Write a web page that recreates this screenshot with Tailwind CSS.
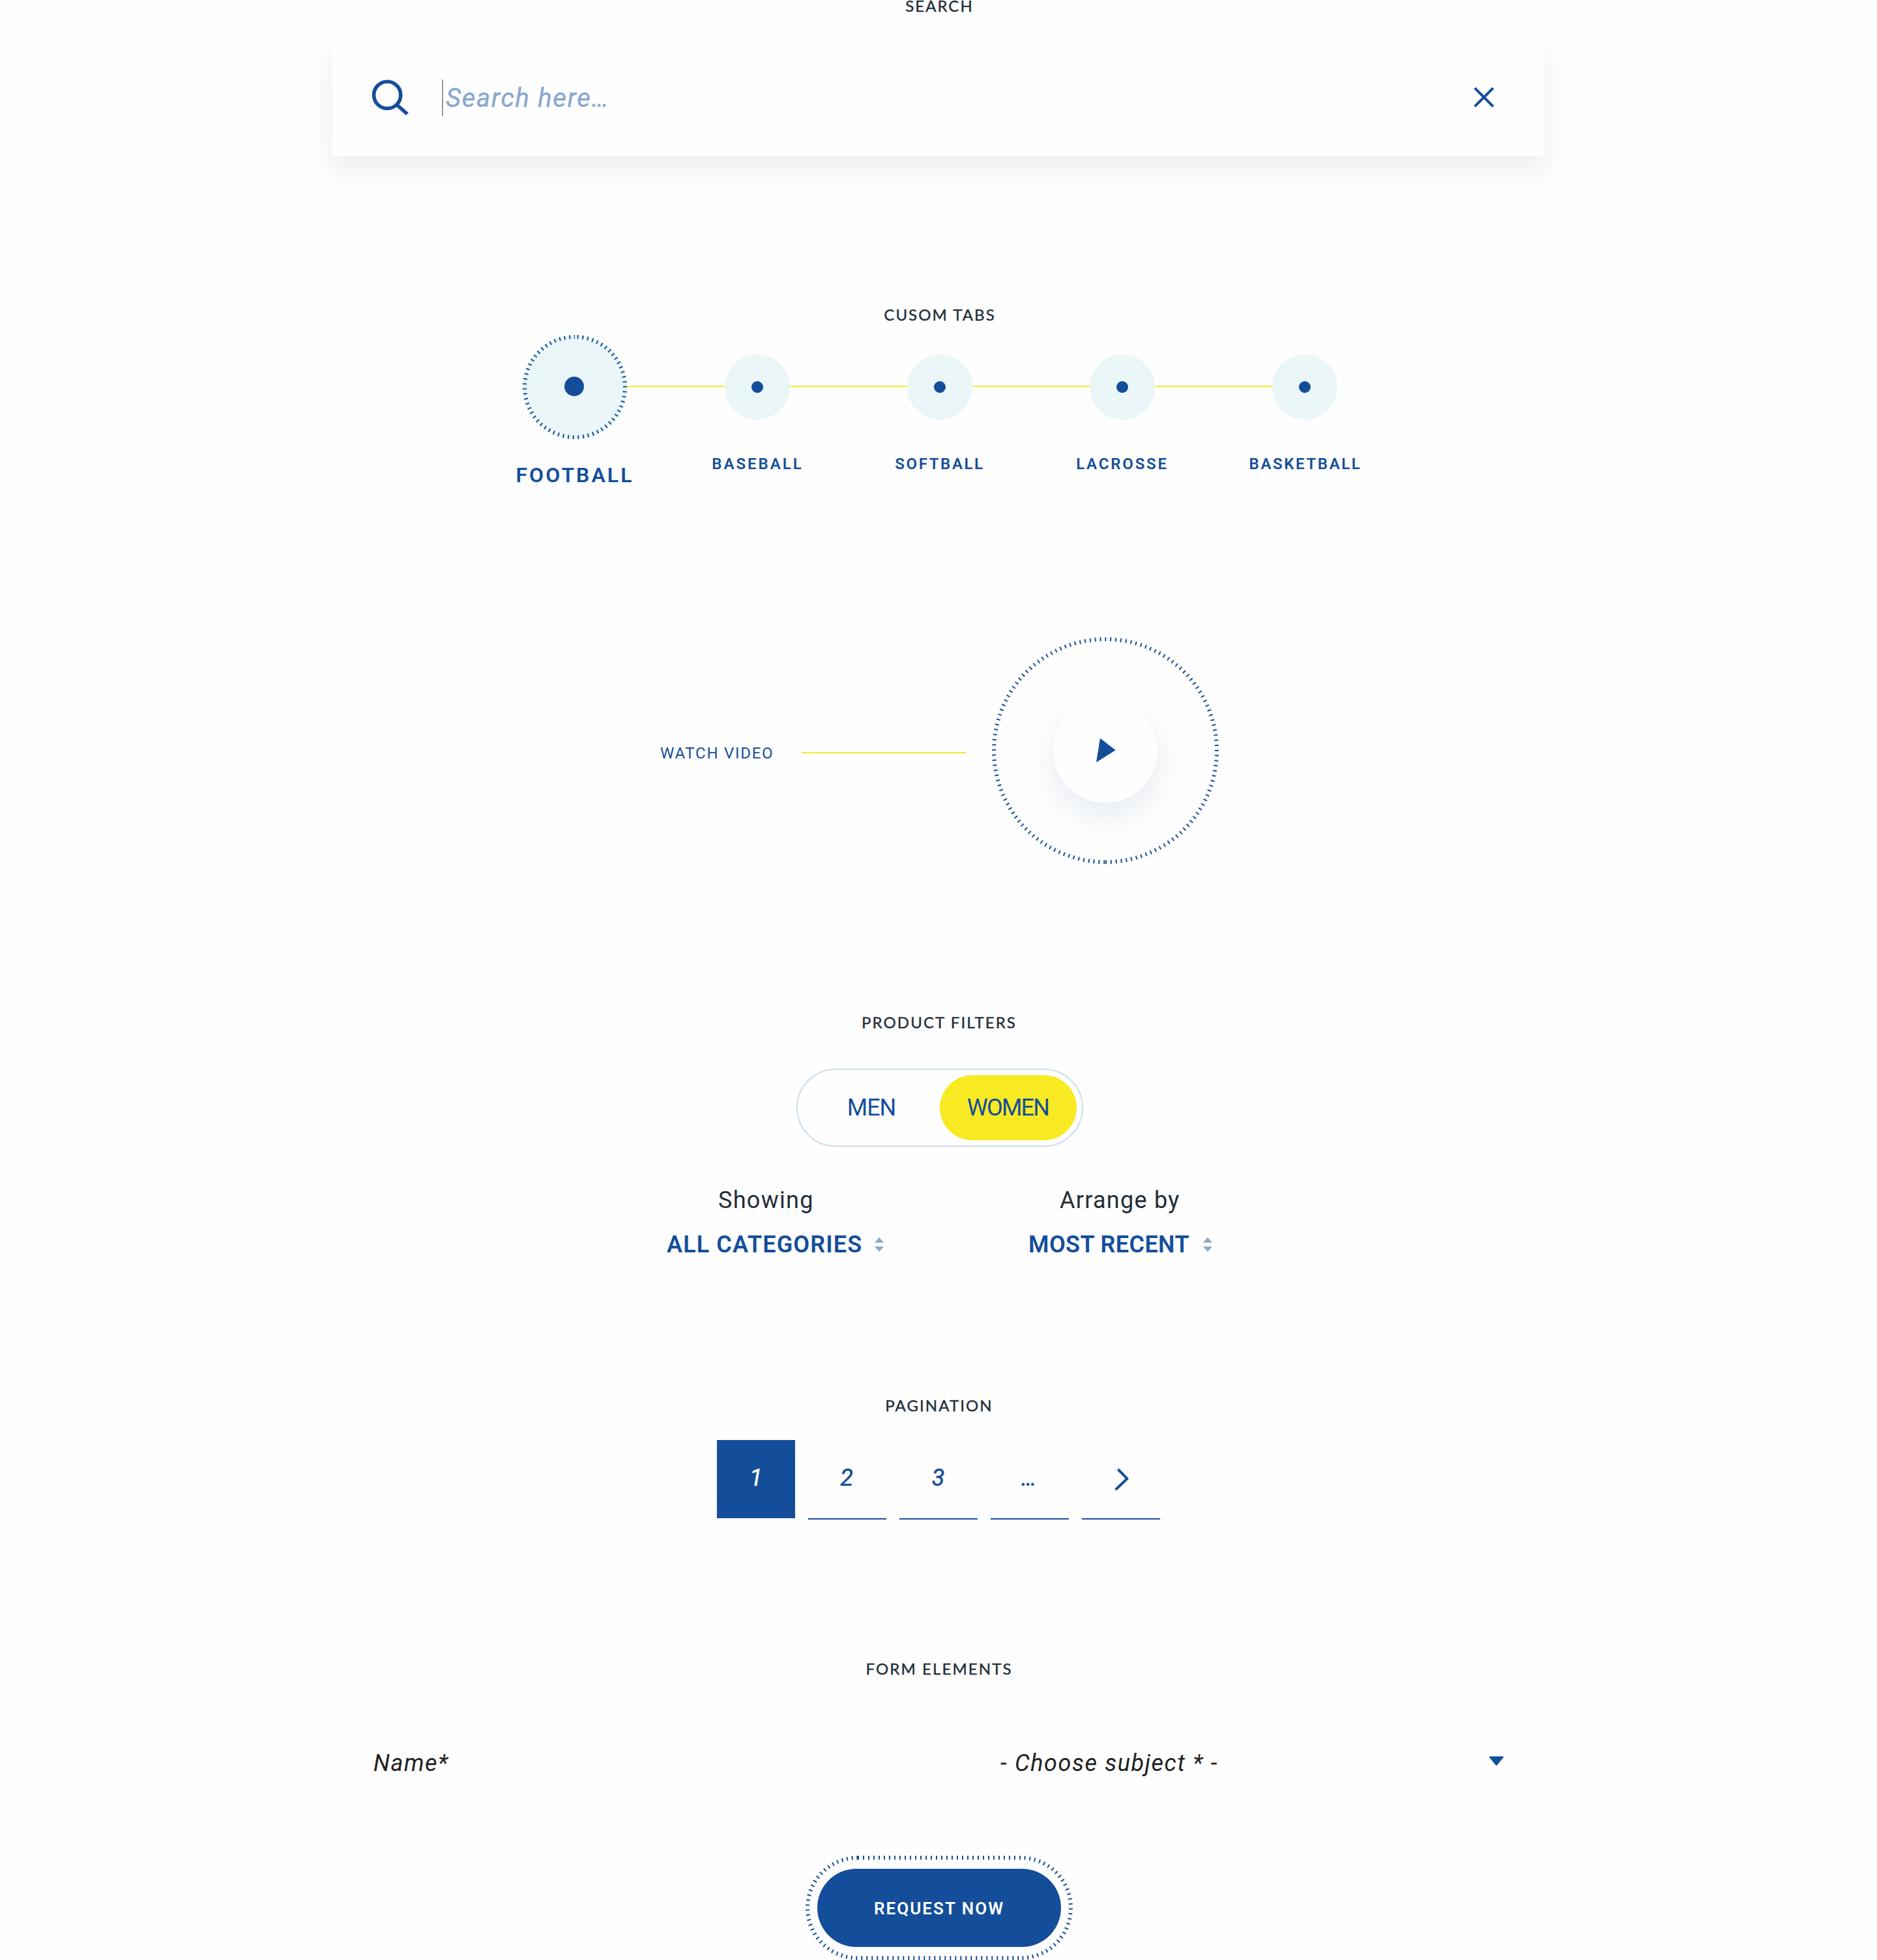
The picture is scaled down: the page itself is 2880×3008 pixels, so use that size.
<!DOCTYPE html>
<html lang="en">
<head>
<meta charset="utf-8">
<title>UI components</title>
<script src="https://cdn.jsdelivr.net/npm/@tailwindcss/browser@4"></script>
</head>
<body class="flex h-[3008px] w-[2880px] flex-col items-center overflow-hidden bg-[#fefefe] font-[Roboto,sans-serif] text-[#144e9a]">

  <!-- Search -->
  <h2 class="pl-[3px] font-[Lato,sans-serif] text-[24px] leading-[18px] tracking-[2.05px] text-[#222d37] [-webkit-text-stroke:0.4px_#222d37]">SEARCH</h2>
  <div class="mt-[46px] flex h-[176px] w-[1860px] shrink-0 items-center bg-[#fefefe] pr-[76px] pb-[4px] pl-[60px] shadow-[0_20px_40px_rgba(20,60,100,0.085)]">
    <svg class="size-[60px]" viewBox="0 0 60 60" fill="none" stroke="#144e9a" stroke-width="5.6">
      <circle cx="24.2" cy="25.8" r="20.6"/>
      <path d="M39 41 55 55"/>
    </svg>
    <span class="ml-[48px] h-[56px] w-[2px] bg-[#999]"></span>
    <span class="ml-[4px] grow pt-[2px] text-[40px] tracking-[1.75px] text-[#89a8d0] italic [-webkit-text-stroke:0.4px_#89a8d0]">Search here…</span>
    <svg class="size-[34px]" viewBox="0 0 34 34" fill="none" stroke="#144e9a" stroke-width="4">
      <path d="M2.8 2.2 31 30.4M31 2.2 2.8 30.4"/>
    </svg>
  </div>

  <!-- Tabs -->
  <h2 class="mt-[234px] pl-[4px] font-[Lato,sans-serif] text-[24px] leading-[18px] tracking-[2.05px] text-[#222d37] [-webkit-text-stroke:0.4px_#222d37]">CUSOM TABS</h2>
  <div class="mt-[22px] ml-[4px] grid w-[1400px] grid-cols-5 font-semibold">
    <div class="flex flex-col items-center">
      <div class="flex h-[160px] w-full items-center">
        <span class="grow"></span>
        <svg class="size-[160px]" viewBox="0 0 160 160">
          <circle cx="80" cy="80" r="80" fill="#eaf6f8"/>
          <path d="M80 3a77 77 0 0 1 0 154a77 77 0 0 1 0-154" fill="none" stroke="#144e9a" stroke-width="6" stroke-dasharray="2 5.711" stroke-dashoffset="-3.7"/>
          <circle cx="79" cy="79" r="15" fill="#144e9a"/>
        </svg>
        <span class="mb-[2px] h-[2px] grow bg-[#f8ea22]"></span>
      </div>
      <span class="mt-[39px] text-[32px] leading-[32px] tracking-[3.05px]">FOOTBALL</span>
    </div>
    <div class="flex flex-col items-center">
      <div class="flex h-[160px] w-full items-center">
        <span class="mb-[2px] h-[2px] grow bg-[#f8ea22]"></span>
        <span class="grid size-[100px] place-items-center rounded-full bg-[#eaf6f8]"><span class="size-[18px] rounded-full bg-[#144e9a]"></span></span>
        <span class="mb-[2px] h-[2px] grow bg-[#f8ea22]"></span>
      </div>
      <span class="mt-[26px] pl-px text-[24px] leading-[24px] tracking-[3px]">BASEBALL</span>
    </div>
    <div class="flex flex-col items-center">
      <div class="flex h-[160px] w-full items-center">
        <span class="mb-[2px] h-[2px] grow bg-[#f8ea22]"></span>
        <span class="grid size-[100px] place-items-center rounded-full bg-[#eaf6f8]"><span class="size-[18px] rounded-full bg-[#144e9a]"></span></span>
        <span class="mb-[2px] h-[2px] grow bg-[#f8ea22]"></span>
      </div>
      <span class="mt-[26px] text-[24px] leading-[24px] tracking-[2.6px]">SOFTBALL</span>
    </div>
    <div class="flex flex-col items-center">
      <div class="flex h-[160px] w-full items-center">
        <span class="mb-[2px] h-[2px] grow bg-[#f8ea22]"></span>
        <span class="grid size-[100px] place-items-center rounded-full bg-[#eaf6f8]"><span class="size-[18px] rounded-full bg-[#144e9a]"></span></span>
        <span class="mb-[2px] h-[2px] grow bg-[#f8ea22]"></span>
      </div>
      <span class="mt-[26px] text-[24px] leading-[24px] tracking-[2.8px]">LACROSSE</span>
    </div>
    <div class="flex flex-col items-center">
      <div class="flex h-[160px] w-full items-center">
        <span class="mb-[2px] h-[2px] grow bg-[#f8ea22]"></span>
        <span class="grid size-[100px] place-items-center rounded-full bg-[#eaf6f8]"><span class="size-[18px] rounded-full bg-[#144e9a]"></span></span>
        <span class="grow"></span>
      </div>
      <span class="mt-[26px] pl-[2px] text-[24px] leading-[24px] tracking-[2.6px]">BASKETBALL</span>
    </div>
  </div>

  <!-- Video -->
  <div class="mt-[233px] ml-[2px] flex w-[858px] items-center">
    <span class="mt-[8px] w-[218px] pl-px text-[24px] leading-[24px] tracking-[1.72px]">WATCH VIDEO</span>
    <span class="mt-[6px] h-[2px] w-[252px] bg-[#f8ea22]"></span>
    <div class="relative ml-[40px] grid size-[348px] place-items-center">
      <svg class="absolute inset-0 size-[348px]" viewBox="0 0 348 348" fill="none" stroke="#144e9a" stroke-width="6" stroke-dasharray="2 5.875">
        <path d="M174 345a171 171 0 0 0 0-342a171 171 0 0 0 0 342"/>
      </svg>
      <div class="size-[160px] rounded-full bg-[#fefefe] shadow-[0_20px_50px_rgba(20,78,150,0.1)]">
        <svg class="size-[160px]" viewBox="0 0 160 160" fill="#144e9a"><path d="M72 61 95.7 79.3 66 98Z"/></svg>
      </div>
    </div>
  </div>

  <!-- Product filters -->
  <h2 class="mt-[234px] pl-[2px] font-[Lato,sans-serif] text-[24px] leading-[18px] tracking-[2.1px] text-[#222d37] [-webkit-text-stroke:0.4px_#222d37]">PRODUCT FILTERS</h2>
  <div class="mt-[62px] ml-[4px] flex h-[120px] w-[440px] shrink-0 rounded-full border-2 border-[#cddcec] p-[8px] text-[36px]">
    <span class="grid w-[210px] place-items-center tracking-[-1px]">MEN</span>
    <span class="grid w-[210px] place-items-center rounded-full bg-[#f8ea22] pr-px tracking-[-1.8px]">WOMEN</span>
  </div>
  <div class="mt-[64px] ml-[3px] flex w-[837px] justify-between text-[36px] leading-[36px]">
    <div class="w-[333px]">
      <div class="pl-[79px] tracking-[1.3px] text-[#222d37]">Showing</div>
      <div class="mt-[32px] flex items-center justify-between font-semibold whitespace-nowrap">
        <span class="tracking-[1.12px]">ALL CATEGORIES</span>
        <svg class="h-[22px] w-[14px]" viewBox="0 0 14 22" fill="#89a8d0"><path d="M7 0l7 8H0ZM0 14h14L7 22Z"/></svg>
      </div>
    </div>
    <div class="w-[282px]">
      <div class="pl-[48px] tracking-[1.26px] text-[#222d37]">Arrange by</div>
      <div class="mt-[32px] flex items-center justify-between font-semibold whitespace-nowrap">
        <span class="tracking-[0.4px]">MOST RECENT</span>
        <svg class="h-[22px] w-[14px]" viewBox="0 0 14 22" fill="#89a8d0"><path d="M7 0l7 8H0ZM0 14h14L7 22Z"/></svg>
      </div>
    </div>
  </div>

  <!-- Pagination -->
  <h2 class="mt-[220px] pl-[2px] font-[Lato,sans-serif] text-[24px] leading-[18px] tracking-[2.1px] text-[#222d37] [-webkit-text-stroke:0.4px_#222d37]">PAGINATION</h2>
  <div class="mt-[44px] flex h-[122px] shrink-0 gap-[20px] text-[36px] italic">
    <span class="grid h-[120px] w-[120px] place-items-center bg-[#144e9a] pb-[4px] text-white [-webkit-text-stroke:0.5px_#fff]">1</span>
    <span class="grid w-[120px] place-items-center border-b-2 border-[#144e9a] pr-[2px] pb-[4px] [-webkit-text-stroke:0.5px_#144e9a]">2</span>
    <span class="grid w-[120px] place-items-center border-b-2 border-[#144e9a] pr-px pb-[4px] [-webkit-text-stroke:0.5px_#144e9a]">3</span>
    <span class="grid w-[120px] place-items-center border-b-2 border-[#144e9a] pr-[3px] pb-[4px] [-webkit-text-stroke:0.5px_#144e9a]">…</span>
    <span class="grid w-[120px] place-items-center border-b-2 border-[#144e9a]">
      <svg class="h-[36px] w-[24px]" viewBox="0 0 24 36" fill="none" stroke="#144e9a" stroke-width="4" stroke-linecap="round" stroke-linejoin="round"><path d="M8.5 4 21.5 17.3 5 33"/></svg>
    </span>
  </div>

  <!-- Form -->
  <h2 class="mt-[220px] pl-[2px] font-[Lato,sans-serif] text-[24px] leading-[18px] tracking-[2.1px] text-[#222d37] [-webkit-text-stroke:0.4px_#222d37]">FORM ELEMENTS</h2>
  <div class="mt-[118px] flex w-[1736px] items-center text-[36px] leading-[36px] text-[#222] italic">
    <span class="w-[963px] pl-px tracking-[1.5px]">Name*</span>
    <span class="grow tracking-[1.5px] [word-spacing:0.6px]">- Choose subject * -</span>
    <svg class="mb-[7px] h-[15px] w-[24px]" viewBox="0 0 24 15" fill="#144e9a" stroke="#144e9a" stroke-width="2" stroke-linejoin="round"><path d="M2 1.5h20L12 13.5Z"/></svg>
  </div>
  <div class="relative mt-[124px] ml-[2px] grid h-[160px] w-[410px] shrink-0 place-items-center">
    <svg class="absolute inset-0 h-[160px] w-[410px]" viewBox="0 0 410 160" fill="none" stroke="#144e9a" stroke-width="6">
      <path d="M80 3H331" stroke-dasharray="2 6"/>
      <path d="M330 3a77 77 0 0 1 0 154" stroke-dasharray="2 5.71" stroke-dashoffset="2.04"/>
      <path d="M330 157H80" stroke-dasharray="2 6" stroke-dashoffset="5.3"/>
      <path d="M80 157a77 77 0 0 1 0-154" stroke-dasharray="2 5.71" stroke-dashoffset="7"/>
    </svg>
    <button class="h-[120px] w-[374px] rounded-full bg-[#144e9a] pt-[2px] text-[26px] font-semibold tracking-[2.05px] text-white">REQUEST NOW</button>
  </div>
</body>
</html>
